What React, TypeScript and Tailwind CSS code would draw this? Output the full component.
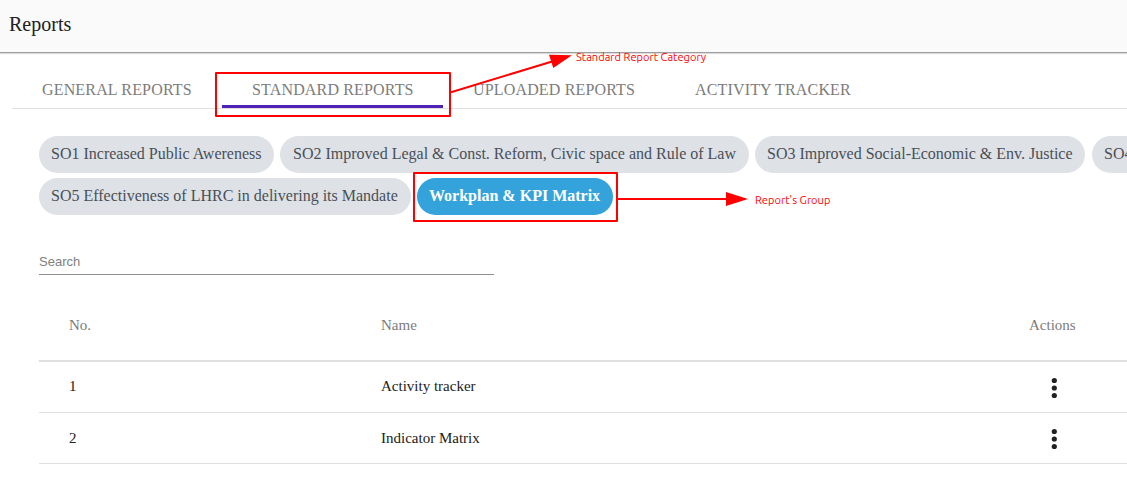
import React from "react";

const tabs = [
  { label: "GENERAL REPORTS", width: "w-[210px]" },
  { label: "STANDARD REPORTS", width: "w-[221px]", active: true },
  { label: "UPLOADED REPORTS", width: "w-[222px]" },
  { label: "ACTIVITY TRACKER", width: "w-[216px]" },
];

const groups = [
  [
    { label: "SO1 Increased Public Awereness", width: "w-[235px]" },
    { label: "SO2 Improved Legal & Const. Reform, Civic space and Rule of Law", width: "w-[469px]", inset: "pl-[13px]" },
    { label: "SO3 Improved Social-Economic & Env. Justice", width: "w-[330px]" },
    { label: "SO4", width: "w-[260px]", inset: "ml-px pl-3" },
  ],
  [
    { label: "SO5 Effectiveness of LHRC in delivering its Mandate", width: "w-[372px]" },
    { label: "Workplan & KPI Matrix", width: "w-[196px]", active: true },
  ],
];

const rows = [
  { name: "Activity tracker", align: "pb-[2px]" },
  { name: "Indicator Matrix", align: "pb-0" },
];

function MoreIcon() {
  return (
    <svg width="24" height="24" viewBox="0 0 24 24" fill="#212121">
      <circle cx="12.3" cy="4.5" r="2.6" />
      <circle cx="12.3" cy="12" r="2.6" />
      <circle cx="12.3" cy="19.5" r="2.6" />
    </svg>
  );
}

function Annotations() {
  return (
    <div className="pointer-events-none absolute inset-0 font-['Ubuntu','Noto_Sans',sans-serif] text-[11px] leading-[14px] tracking-[0.04px] text-[#ff0000]">
      <div className="absolute left-[215px] top-[72px] h-[45px] w-[236px] rounded-[1px] border-2 border-[#ff0000]" />
      <div className="absolute left-[413px] top-[172px] h-[50px] w-[205px] rounded-[1px] border-2 border-[#ff0000]" />
      <svg className="absolute inset-0" width="1127" height="479" fill="#ff0000" stroke="none">
        <path d="M451 92.2L553 61.2" stroke="#ff0000" strokeWidth="2" />
        <path d="M549 54.8L572 55.2L553.3 68Z" />
        <path d="M618 199H728" stroke="#ff0000" strokeWidth="2" />
        <path d="M726 192L748 199L726 206Z" />
      </svg>
      <span className="absolute left-[576px] top-[50px] whitespace-nowrap">Standard Report Category</span>
      <span className="absolute left-[755px] top-[193px] whitespace-nowrap">Report's Group</span>
    </div>
  );
}

export default function App() {
  return (
    <div className="relative h-[479px] w-[1127px] overflow-hidden bg-white font-['Liberation_Serif',serif] text-[#212121]">
      <header className="flex h-[53px] items-center border-b border-[#9e9e9e] bg-[#fafafa] pb-1 pl-[9px] shadow-[0_1px_1px_rgba(0,0,0,0.14)]">
        <h1 className="text-[20px] leading-6">Reports</h1>
      </header>

      <nav className="ml-3 flex h-14 border-b border-[#e0e0e0] pt-[17px] text-[16px] leading-[40px] tracking-[0.16px] text-[#7c7c7c]">
        {tabs.map((tab) => (
          <button
            key={tab.label}
            className={`${tab.width} flex h-[38px] shrink-0 flex-col justify-start whitespace-nowrap pl-[30px] text-left ${tab.active ? "relative" : ""}`}
          >
            {tab.label}
            {tab.active && <span className="absolute inset-x-0 bottom-0 h-[3px] bg-[#4f22b5]" />}
          </button>
        ))}
      </nav>

      <main className="pl-[39px]">
        <div className="flex flex-col gap-[5px] pt-[27px]">
          {groups.map((line, i) => (
            <div key={i} className="flex gap-1.5">
              {line.map((chip) => (
                <button
                  key={chip.label}
                  className={`${chip.width} ${chip.inset ?? "pl-3"} h-[37px] shrink-0 whitespace-nowrap rounded-full pb-[2px] text-left text-[16px] leading-[35px] ${
                    chip.active ? "bg-[#34a3dc] font-bold text-white" : "bg-[#dee1e6] text-[#495057]"
                  }`}
                >
                  {chip.label}
                </button>
              ))}
            </div>
          ))}
        </div>

        <input
          placeholder="Search"
          className="mt-[34px] block h-[26px] w-[455px] border-b border-[#8f8f8f] bg-transparent font-['Liberation_Sans',sans-serif] text-[13px] text-[#212121] outline-none placeholder:text-[#808080]"
        />

        <table className="mt-[15px] w-full table-fixed border-collapse text-left text-[15px] leading-[20px]">
          <colgroup>
            <col className="w-[312px]" />
            <col className="w-[648px]" />
            <col />
          </colgroup>
          <thead>
            <tr className="h-[71px] border-b-2 border-[#e0e0e0] text-[#7c7c7c]">
              <th className="pl-[30px] font-normal">No.</th>
              <th className="pl-[30px] font-normal">Name</th>
              <th className="pl-[30px] font-normal">Actions</th>
            </tr>
          </thead>
          <tbody>
            {rows.map((row, i) => (
              <tr key={row.name} className="h-[51px] border-b border-[#e0e0e0]">
                <td className={`pl-[30px] ${row.align}`}>{i + 1}</td>
                <td className={`pl-[30px] ${row.align}`}>{row.name}</td>
                <td className="pl-[43px] pt-[2px]">
                  <MoreIcon />
                </td>
              </tr>
            ))}
          </tbody>
        </table>
      </main>
      <Annotations />
    </div>
  );
}
